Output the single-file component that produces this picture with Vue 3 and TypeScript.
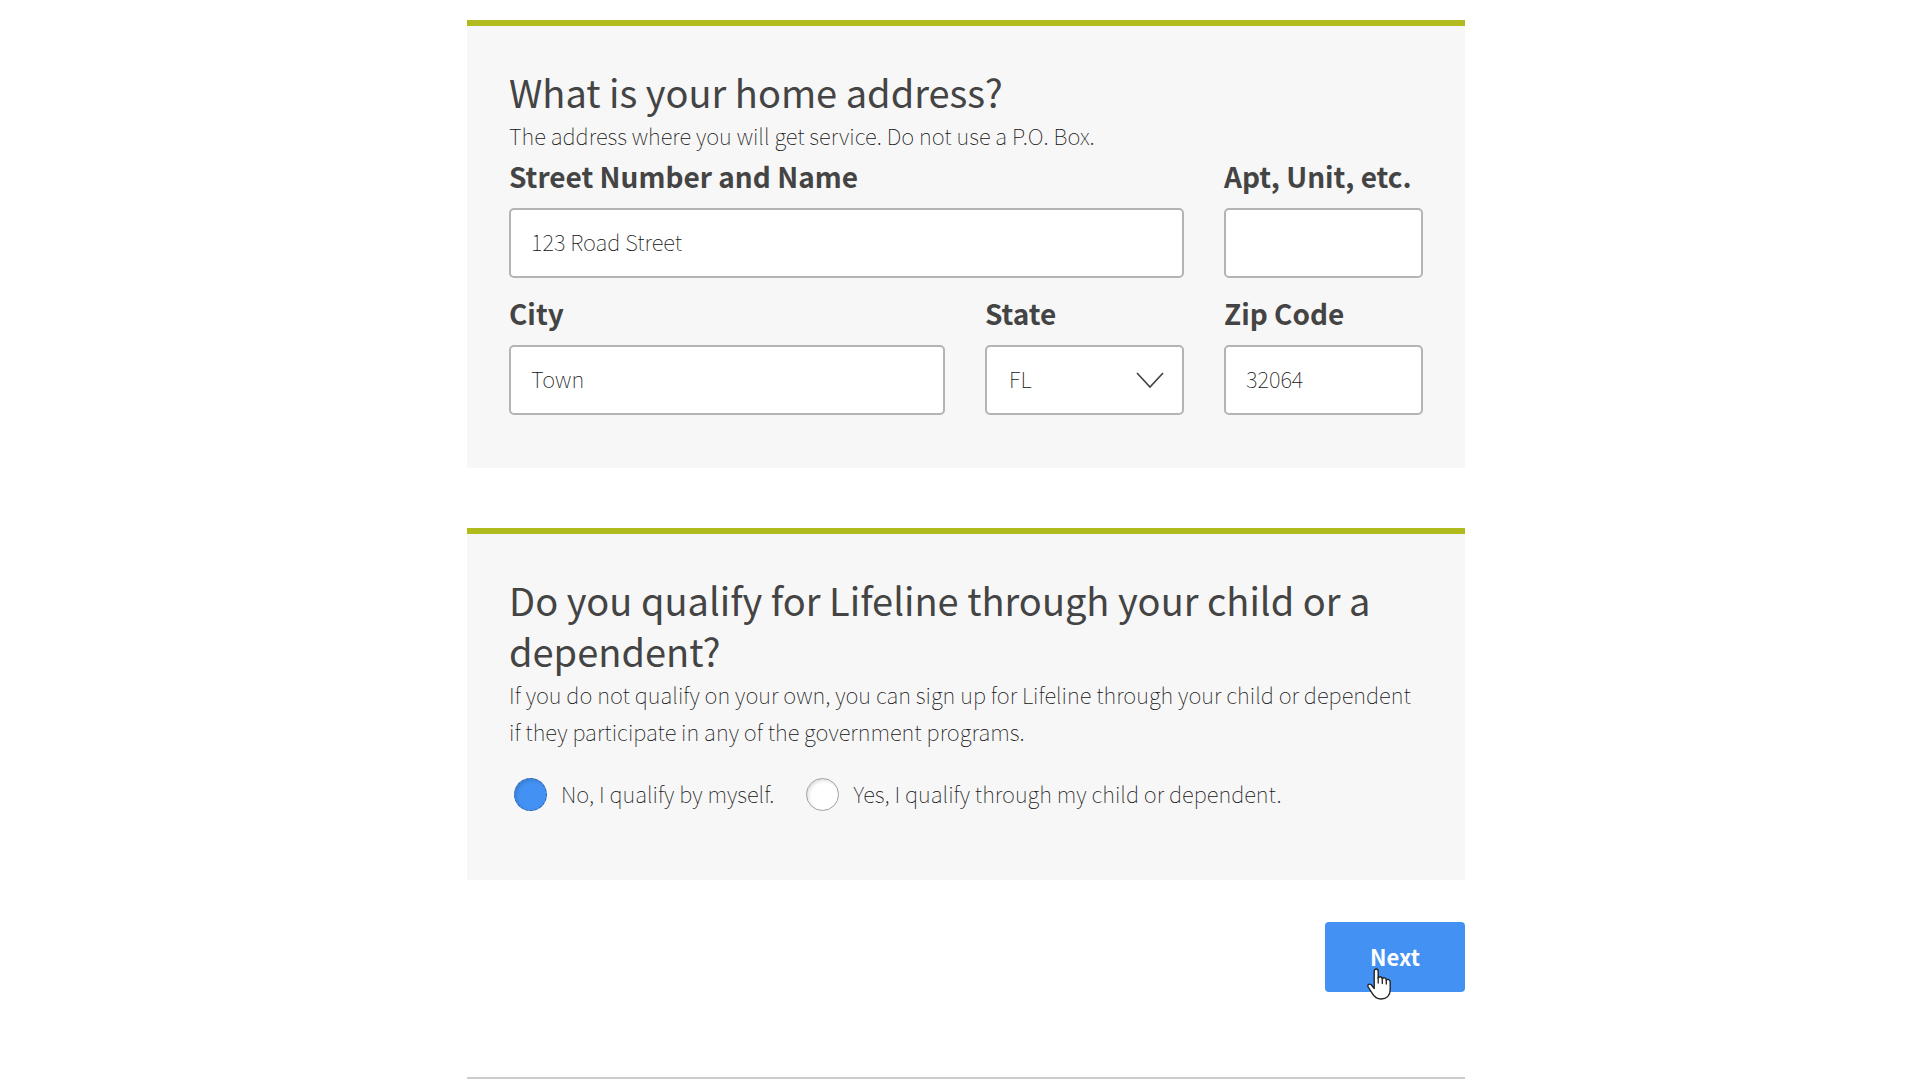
<script setup lang="ts">
import { ref } from 'vue'

interface Choice {
  value: string
  label: string
}

const street = ref('123 Road Street')
const unit = ref('')
const city = ref('Town')
const state = ref('FL')
const zip = ref('32064')
const qualifier = ref('self')

const states: string[] = ['AL', 'FL', 'GA', 'NY', 'TX']
const choices: Choice[] = [
  { value: 'self', label: 'No, I qualify by myself.' },
  { value: 'dependent', label: 'Yes, I qualify through my child or dependent.' },
]
</script>

<template>
  <main class="page">
    <form class="form" @submit.prevent>
      <section class="card">
        <h2 class="title">What is your home address?</h2>
        <p class="hint">The address where you will get service. Do not use a P.O. Box.</p>
        <div class="fields">
          <div class="field wide">
            <label for="street">Street Number and Name</label>
            <input id="street" v-model="street" class="control" type="text" />
          </div>
          <div class="field">
            <label for="unit">Apt, Unit, etc.</label>
            <input id="unit" v-model="unit" class="control" type="text" />
          </div>
          <div class="field">
            <label for="city">City</label>
            <input id="city" v-model="city" class="control" type="text" />
          </div>
          <div class="field">
            <label for="state">State</label>
            <div class="select">
              <select id="state" v-model="state" class="control">
                <option v-for="s in states" :key="s" :value="s">{{ s }}</option>
              </select>
              <svg class="chevron" viewBox="0 0 28 17" aria-hidden="true">
                <path d="M1 1 L14 15 L27 1" fill="none" stroke="#444" stroke-width="1.7" />
              </svg>
            </div>
          </div>
          <div class="field">
            <label for="zip">Zip Code</label>
            <input id="zip" v-model="zip" class="control" type="text" />
          </div>
        </div>
      </section>

      <section class="card">
        <h2 id="qualify" class="title">Do you qualify for Lifeline through your child or a dependent?</h2>
        <p class="hint">
          If you do not qualify on your own, you can sign up for Lifeline through your child or dependent
          if they participate in any of the government programs.
        </p>
        <div class="choices" role="radiogroup" aria-labelledby="qualify">
          <label v-for="c in choices" :key="c.value" class="choice">
            <input v-model="qualifier" class="radio" type="radio" name="qualifier" :value="c.value" />
            <span>{{ c.label }}</span>
          </label>
        </div>
      </section>

      <div class="actions">
        <button class="next" type="submit">
          Next
          <svg class="pointer" viewBox="0 0 24 32" aria-hidden="true">
            <path
              d="M7.2 20.5 V3.4 C7.2 0.2 11.2 0.2 11.2 3.4 V10 C12 8 15.3 8.3 15.3 11 C16.3 9 19.3 9.6 19.3 12.2 C20.6 10.6 23.2 11.6 23.2 14 V21.5 C23.2 27.5 19.5 31 14 31 C9.5 31 7.2 28.8 5.2 25.4 L1.2 19 C0 16.8 2.4 15.2 4.2 16.8 Z"
              fill="#fff" stroke="#222" stroke-width="1.4" stroke-linejoin="round"
            />
            <path d="M11.2 9.5 V15 M15.3 10.5 V15.5 M19.3 11.8 V16" fill="none" stroke="#222" stroke-width="1.3" stroke-linecap="round" />
          </svg>
        </button>
      </div>
      <hr class="rule" />
    </form>
  </main>
</template>

<style>
body {
  margin: 0;
  background: #fff;
}
</style>

<style scoped>
.page {
  padding: 20px 0 0 12px;
  color: #444;
  font-family: "Noto Sans CJK SC", "Noto Sans", sans-serif;
  font-size: 22px;
  font-weight: 100;
  line-height: 37px;
}
.form {
  max-width: 998px;
  margin: 0 auto;
}
.card {
  padding: 40px 42px 53px;
  border-top: 6px solid #b2bb1e;
  background: #f7f7f7;
}
.card + .card {
  margin-top: 60px;
}
.title {
  margin: 0;
  font-size: 38px;
  font-weight: 400;
  line-height: 51px;
}
.hint {
  margin: 0;
  color: #111;
}
.fields {
  display: grid;
  grid-template-columns: minmax(0, 1fr) 199px 199px;
  gap: 13px 40px;
}
.wide {
  grid-column: span 2;
}
.field label {
  display: block;
  margin-bottom: 10px;
  font-size: 28px;
  font-weight: 600;
  line-height: 44px;
}
.control {
  display: block;
  box-sizing: border-box;
  width: 100%;
  height: 70px;
  padding: 0 20px 5px;
  border: 2px solid #b4b4b4;
  border-radius: 5px;
  background: #fff;
  color: #111;
  font: inherit;
  appearance: none;
}
.select {
  position: relative;
}
.select .control {
  padding: 0 22px 3px;
}
.chevron {
  position: absolute;
  top: 27px;
  right: 20px;
  width: 28px;
  height: 17px;
  pointer-events: none;
}
.choices {
  display: flex;
  flex-wrap: wrap;
  gap: 0 32px;
  margin: 25px 0 13px 5px;
  color: #111;
}
.choice {
  display: flex;
  align-items: center;
  gap: 14px;
}
.choice span {
  padding-bottom: 2px;
}
.radio {
  flex: none;
  width: 33px;
  height: 33px;
  margin: 0;
  border: 1px solid #a0a0a0;
  border-radius: 50%;
  background: #fff;
  box-shadow: inset 2px 2px 3px #e4e4e4;
  appearance: none;
}
.radio:checked {
  border: 1px dashed #2f5f9f;
  background: #4391f3;
  box-shadow: inset 2px 2px 3px #3d80d6;
}
.actions {
  display: flex;
  justify-content: flex-end;
  margin-top: 42px;
}
.next {
  position: relative;
  width: 140px;
  height: 70px;
  padding: 0 0 2px;
  border: 0;
  border-radius: 4px;
  background: #4391f3;
  color: #fff;
  font: inherit;
  font-weight: 700;
  cursor: pointer;
}
.pointer {
  position: absolute;
  top: 46px;
  left: 42px;
  width: 24px;
  height: 32px;
}
.rule {
  height: 2px;
  margin: 85px 0 0;
  border: 0;
  background: #ccc;
}
</style>
